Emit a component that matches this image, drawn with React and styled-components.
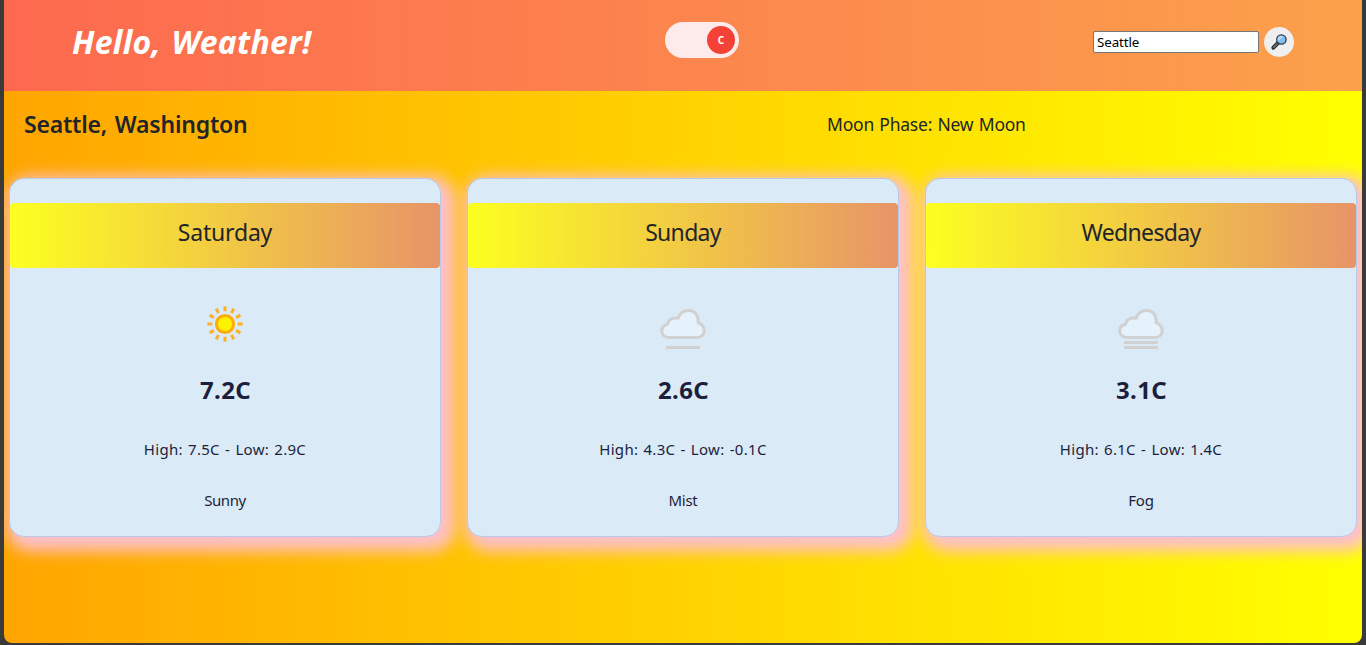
import React, { useState } from "react";
import styled, { createGlobalStyle } from "styled-components";

const GlobalStyle = createGlobalStyle`
  * { box-sizing: border-box; }
  html, body { margin: 0; height: 645px; overflow: hidden; background: #3a3a3a; }
  body, input, button { font-family: "Trebuchet MS", "Noto Sans", "Open Sans", sans-serif; }
`;

const Window = styled.div`
  height: 645px;
  padding: 0 4px 2px;
`;

const Page = styled.main`
  height: 643px;
  overflow: hidden;
  border-radius: 0 0 8px 8px;
  background: linear-gradient(to right, orange, yellow);
  color: #212529;
`;

const Header = styled.header`
  display: grid;
  grid-template-columns: 661px 1fr auto;
  height: 91px;
  padding: 0 68px 0 0;
  background: linear-gradient(to right, #fd694f, #fba14b);
`;

const Title = styled.h1`
  margin: 0;
  padding: 20px 0 0 68px;
  font-size: 32px;
  line-height: 44px;
  font-weight: 700;
  font-style: italic;
  letter-spacing: ${(p) => p.$spacing}px;
  word-spacing: 2px;
  white-space: nowrap;
  color: white;
`;

const Toggle = styled.button`
  display: flex;
  justify-content: flex-end;
  align-items: center;
  width: 74px;
  height: 36px;
  margin-top: 22px;
  padding: 0 4px;
  border: 0;
  border-radius: 18px;
  background: #fcebea;
`;

const Knob = styled.span`
  width: 28px;
  height: 28px;
  border-radius: 50%;
  background: #f44336;
  color: white;
  font-size: 10px;
  font-weight: 700;
  line-height: 28px;
  text-align: center;
`;

const Search = styled.form`
  display: flex;
  align-items: center;
  gap: 5px;
  height: 30px;
  margin-top: 27px;
`;

const SearchInput = styled.input`
  width: 166px;
  height: 22px;
  padding: 1px 3px;
  border: 1px solid #767676;
  border-radius: 2px;
  background: white;
  color: black;
  font-size: 13.333px;
  letter-spacing: -0.1px;
  outline: 0;
`;

const SearchButton = styled.button`
  display: grid;
  place-items: center;
  width: 30px;
  height: 30px;
  padding: 0;
  border: 0;
  border-radius: 50%;
  background: #efefef;
`;

const Location = styled.section`
  display: grid;
  grid-template-columns: 823px 1fr;
  height: 87px;
`;

const City = styled.h2`
  margin: 0;
  padding: 15px 0 0 20px;
  font-size: 23px;
  line-height: 36px;
  font-weight: 600;
  letter-spacing: ${(p) => p.$spacing}px;
  word-spacing: 2px;
  white-space: nowrap;
`;

const Moon = styled.p`
  margin: 0;
  padding-top: 20px;
  font-size: 17.5px;
  line-height: 27px;
  letter-spacing: ${(p) => p.$spacing}px;
  word-spacing: 1px;
  white-space: nowrap;
`;

const Forecast = styled.section`
  display: grid;
  grid-template-columns: repeat(3, 1fr);
  gap: 26px;
  padding: 0 5px;
`;

const Card = styled.article`
  height: 359px;
  padding-top: 24px;
  border: 1px solid #b9c9e8;
  border-radius: 15px;
  background: #dbeaf7;
  box-shadow: 6px 6px 15px 8px pink;
  text-align: center;
  color: #1c1e3c;
`;

const Day = styled.h3`
  margin: 0 0 34px;
  height: 65px;
  border-radius: 4px;
  background: linear-gradient(to right, #fcff20, #e79468);
  font-size: 23px;
  font-weight: 400;
  line-height: 59px;
  letter-spacing: ${(p) => p.$spacing}px;
  color: #212529;
`;

const IconBox = styled.div`
  height: 50px;
  svg { display: block; margin: 0 auto; }
`;

const Temperature = styled.p`
  margin: 0;
  padding: 20px 0 1px 1px;
  font-size: 24px;
  font-weight: 700;
  line-height: 36px;
  letter-spacing: ${(p) => p.$spacing}px;
`;

const Detail = styled.p`
  margin: ${(p) => p.$top}px 0 0;
  font-size: 15px;
  line-height: 24px;
  letter-spacing: ${(p) => p.$spacing}px;
  word-spacing: 1px;
`;

const SunIcon = () => (
  <svg width="50" height="50" viewBox="0 0 50 50">
    <circle cx="25" cy="22" r="8.6" fill="#fff200" stroke="#ffad05" strokeWidth="3" />
    {Array.from({ length: 12 }, (_, i) => (
      <path key={i} d="M25 4.3V9.3" stroke="#fbb02a" strokeWidth="3" transform={`rotate(${i * 30} 25 22)`} />
    ))}
  </svg>
);

const CloudIcon = ({ lines }) => (
  <svg width="50" height="50" viewBox="0 0 50 50">
    <path
      d="M11 35.5H39C43.2 35.5 46.2 32.4 46.2 28.7C46.2 25 43.6 22 40.2 20.6C41 14 37.2 8.5 30.6 8.5C25.2 8.5 21.6 11.6 20.1 16.2C14.4 15.3 10.4 17.6 9.6 22.2C5.8 22.9 3.7 25.6 3.7 28.9C3.7 32.6 6.8 35.5 11 35.5Z"
      fill="#e5f1fb" stroke="#d1d1d1" strokeWidth="3" strokeLinejoin="round"
    />
    {lines.map((y) => <path key={y} d={`M8 ${y}H42`} stroke="#d1d1d1" strokeWidth="3" />)}
  </svg>
);

const MagnifierIcon = () => (
  <svg width="18" height="18" viewBox="0 0 18 18">
    <path d="M3.4 14.7L8.3 9.7" stroke="#25292c" strokeWidth="4" strokeLinecap="round" />
    <path d="M3.5 14.5L7 11" stroke="#626c73" strokeWidth="1.9" strokeLinecap="round" />
    <circle cx="11.4" cy="6.5" r="4.7" fill="#83bdf0" stroke="#303c46" strokeWidth="1.3" />
    <path d="M7.9 8.3A4 4 0 0 1 13.4 3.2Z" fill="#b5dcfb" />
  </svg>
);

const days = [
  { day: "Saturday", spacing: -0.2, icon: <SunIcon />, temp: "7.2C", range: "High: 7.5C - Low: 2.9C", text: "Sunny", textSpacing: -0.4 },
  { day: "Sunday", spacing: -0.7, icon: <CloudIcon lines={[45.5]} />, temp: "2.6C", range: "High: 4.3C - Low: -0.1C", text: "Mist", textSpacing: -0.3 },
  { day: "Wednesday", spacing: -0.65, icon: <CloudIcon lines={[40.5, 45.5]} />, temp: "3.1C", range: "High: 6.1C - Low: 1.4C", text: "Fog", textSpacing: -0.2 },
];

export default function App() {
  const [query, setQuery] = useState("Seattle");
  return (
    <Window>
      <GlobalStyle />
      <Page>
        <Header>
          <Title $spacing={0.27}>Hello, Weather!</Title>
          <Toggle type="button"><Knob>C</Knob></Toggle>
          <Search onSubmit={(e) => e.preventDefault()}>
            <SearchInput value={query} onChange={(e) => setQuery(e.target.value)} />
            <SearchButton aria-label="Search"><MagnifierIcon /></SearchButton>
          </Search>
        </Header>
        <Location>
          <City $spacing={-0.2}>Seattle, Washington</City>
          <Moon $spacing={-0.22}>Moon Phase: New Moon</Moon>
        </Location>
        <Forecast>
          {days.map((d) => (
            <Card key={d.day}>
              <Day $spacing={d.spacing}>{d.day}</Day>
              <IconBox>{d.icon}</IconBox>
              <Temperature $spacing={0.4}>{d.temp}</Temperature>
              <Detail $top={28} $spacing={0.3}>{d.range}</Detail>
              <Detail $top={27} $spacing={d.textSpacing}>{d.text}</Detail>
            </Card>
          ))}
        </Forecast>
      </Page>
    </Window>
  );
}
